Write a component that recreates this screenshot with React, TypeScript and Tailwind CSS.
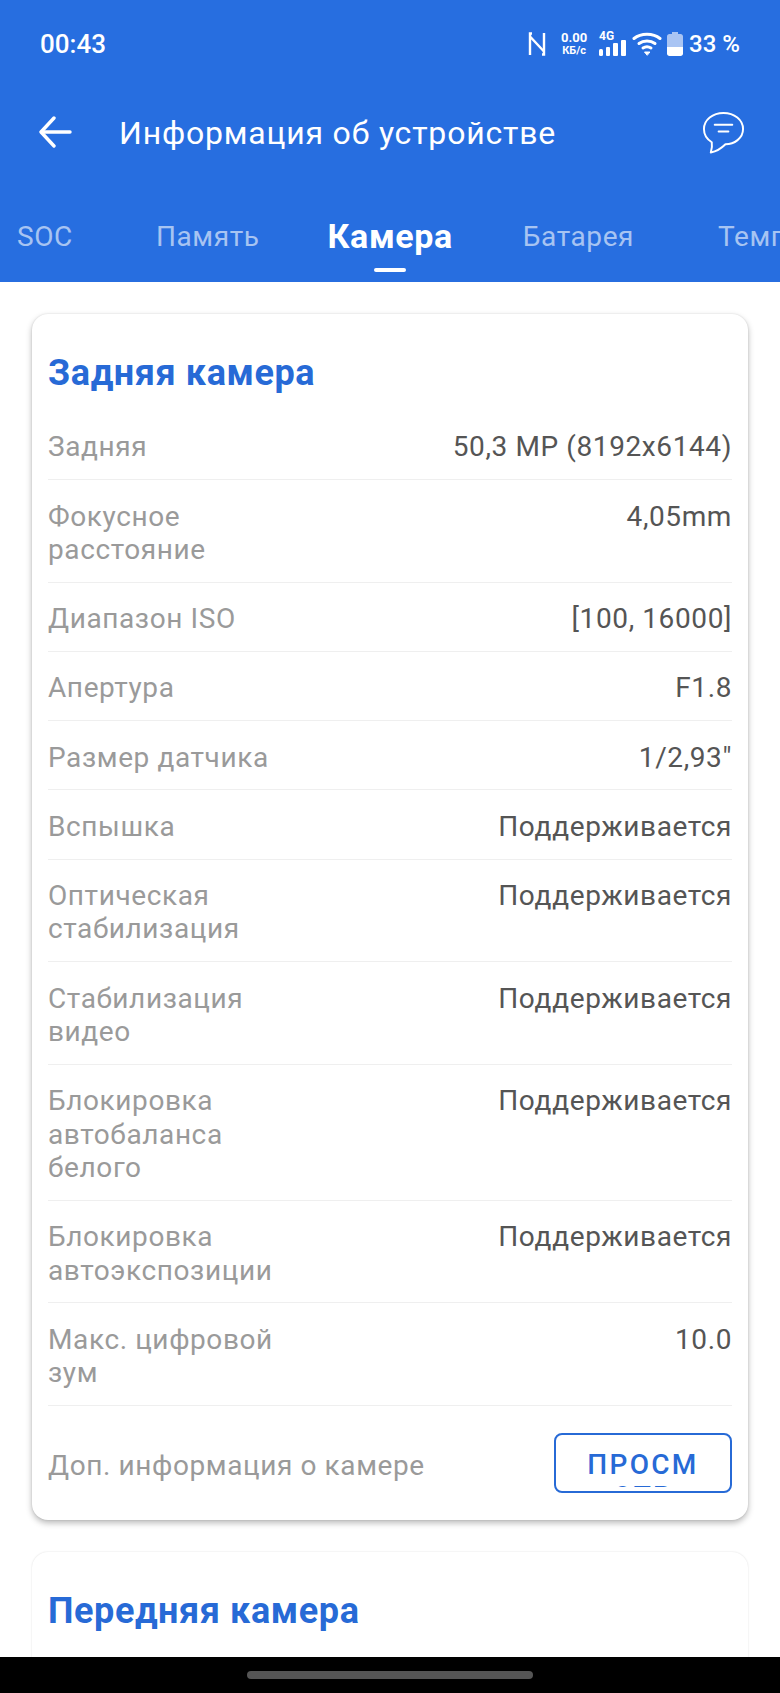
import React from 'react';

const rows: { label: string[]; value: string }[] = [
  { label: ['Задняя'], value: '50,3 MP (8192x6144)' },
  { label: ['Фокусное', 'расстояние'], value: '4,05mm' },
  { label: ['Диапазон ISO'], value: '[100, 16000]' },
  { label: ['Апертура'], value: 'F1.8' },
  { label: ['Размер датчика'], value: '1/2,93"' },
  { label: ['Вспышка'], value: 'Поддерживается' },
  { label: ['Оптическая', 'стабилизация'], value: 'Поддерживается' },
  { label: ['Стабилизация', 'видео'], value: 'Поддерживается' },
  { label: ['Блокировка', 'автобаланса', 'белого'], value: 'Поддерживается' },
  { label: ['Блокировка', 'автоэкспозиции'], value: 'Поддерживается' },
  { label: ['Макс. цифровой', 'зум'], value: '10.0' }
];

const NfcIcon = () => (
  <svg width="18" height="24" viewBox="0 0 18 24" fill="none" stroke="white" strokeWidth="2.4">
    <path d="M2 23V4.5L16 19.500M2 4.500V1.500H4" />
    <path d="M16 1V19.500M16 19.500V22.500H14" />
  </svg>
);

const SignalIcon = () => (
  <svg width="27" height="16" viewBox="0 0 27 16" fill="white">
    <rect x="0" y="9" width="4" height="7" rx="1.5" />
    <rect x="7" y="7" width="4" height="9" rx="1" />
    <rect x="14" y="3" width="5" height="13" rx="1" />
    <rect x="22" y="0" width="5" height="16" rx="1" />
  </svg>
);

const WifiIcon = () => (
  <svg width="30" height="24" viewBox="0 0 30 24" fill="none" stroke="white" strokeWidth="3" strokeLinecap="round">
    <path d="M2 6.500C9 0.800 21 0.800 28 6.500" />
    <path d="M7 11.500C11.500 8 18.500 8 23 11.500" />
    <path d="M11 16C13.500 14.400 16.500 14.400 19 16" />
    <path d="M15 23L12.500 20H17.500Z" fill="white" strokeWidth="1" />
  </svg>
);

const BatteryIcon = () => (
  <svg width="16" height="24" viewBox="0 0 16 24">
    <path d="M5 0H11V2H13.500C15 2 16 3 16 4.500V15H0V4.500C0 3 1 2 2.500 2H5Z" fill="#a9c4f3" />
    <path d="M0 15H16V21.500C16 23 15 24 13.500 24H2.500C1 24 0 23 0 21.500Z" fill="white" />
  </svg>
);

const BackIcon = () => (
  <svg width="33" height="32" viewBox="0 0 33 32" fill="none" stroke="white" strokeWidth="3.4" strokeLinecap="round" strokeLinejoin="round">
    <path d="M31 16H3" />
    <path d="M15 2L2 16L15 30" />
  </svg>
);

const ChatIcon = () => (
  <svg width="43" height="43" viewBox="0 0 44 44" fill="none" stroke="white" strokeWidth="2" strokeLinecap="round" strokeLinejoin="round">
    <path d="M22 2C33 2 42 9 42 18.500C42 28 33 34 24 34C21 37 16 41 9 42.500C10 39 10.500 35 10 32C5 29 2 24 2 18.500C2 9 11 2 22 2Z" />
    <path d="M13 14H31" />
    <path d="M17 21H27" />
  </svg>
);

const App: React.FC = () => {
  return (
    <div className="h-[1693px] w-[780px] overflow-hidden flex flex-col bg-white font-['Roboto',sans-serif]">
      <header className="h-[282px] shrink-0 bg-[#276ee0] text-white overflow-hidden">
        <div className="h-[88px] flex items-center pl-[40px] pr-[40px]">
          <span className="text-[26px] font-medium">00:43</span>
          <div className="ml-auto flex items-center">
            <NfcIcon />
            <div className="ml-[13px] w-[30px] flex flex-col items-center font-bold leading-[13px]">
              <span className="text-[13px]">0.00</span>
              <span className="text-[11px]">КБ/с</span>
            </div>
            <div className="relative ml-[10px] w-[27px] h-[24px] flex items-end">
              <SignalIcon />
              <span className="absolute left-0 -top-[2px] text-[12px] font-bold leading-[12px]">4G</span>
            </div>
            <div className="ml-[6px]"><WifiIcon /></div>
            <div className="ml-[5px]"><BatteryIcon /></div>
            <span className="ml-[6px] text-[24px] font-medium">33 %</span>
          </div>
        </div>
        <div className="h-[88px] flex items-center pl-[39px] pr-[35px]">
          <BackIcon />
          <span className="ml-[47px] pt-[2px] text-[32px] tracking-[0.8px]">Информация об устройстве</span>
          <div className="ml-auto"><ChatIcon /></div>
        </div>
        <nav className="mt-[18px] h-[88px] flex whitespace-nowrap tracking-[0.6px]">
          <span className="ml-[17px] mt-[22px] text-[28px] text-white/60">SOC</span>
          <span className="ml-[83px] mt-[22px] text-[28px] text-white/60">Память</span>
          <div className="ml-[68px] flex flex-col items-center">
            <span className="mt-[17px] text-[34px] font-bold">Камера</span>
            <span className="mt-[6px] w-[32px] h-[4px] rounded-full bg-white"></span>
          </div>
          <span className="ml-[70px] mt-[22px] text-[28px] text-white/60">Батарея</span>
          <span className="ml-[84px] mt-[22px] text-[28px] text-white/60">Температура</span>
        </nav>
      </header>

      <main className="flex-1 overflow-hidden bg-white px-[32px] pt-[32px]">
        <section className="rounded-[16px] bg-white px-[16px] shadow-[0_3px_6px_rgba(0,0,0,0.28),0_0_2px_rgba(0,0,0,0.12)]">
          <h2 className="pt-[33px] text-[36px] leading-[52px] font-bold tracking-[0.6px] text-[#276ad6]">Задняя камера</h2>
          <div className="mt-[12px]">
            {rows.map((row) => (
              <div key={row.label[0] + row.value} className="flex justify-between border-b border-[#efefef] pt-[19.400px] pb-[15.400px] text-[28px] leading-[33.400px] tracking-[0.6px]">
                <div className="text-[#9a9a9a]">
                  {row.label.map((line) => (
                    <div key={line}>{line}</div>
                  ))}
                </div>
                <div className="text-[#555555]">{row.value}</div>
              </div>
            ))}
            <div className="flex items-center justify-between pt-[27px] pb-[27px]">
              <span className="pt-[6px] text-[28px] text-[#9a9a9a] tracking-[0.6px]">Доп. информация о камере</span>
              <button className="w-[178px] h-[60px] rounded-[8px] border-2 border-[#276ad6] pt-[10px] text-[28px] leading-[32px] font-medium tracking-[2.300px] text-[#276ad6]">
                <div className="h-[38px] overflow-hidden">
                  ПРОСМ<br />ОТР
                </div>
              </button>
            </div>
          </div>
        </section>
        <section className="mt-[32px] h-[200px] rounded-[16px] bg-white px-[16px] shadow-[0_0_2px_rgba(0,0,0,0.14)]">
          <h2 className="pt-[33px] text-[36px] leading-[52px] font-bold tracking-[0.6px] text-[#276ad6]">Передняя камера</h2>
        </section>
      </main>

      <footer className="h-[36px] shrink-0 bg-black flex justify-center pt-[14px]">
        <div className="w-[286px] h-[8px] rounded-full bg-[#555555]"></div>
      </footer>
    </div>
  );
};

export default App;
